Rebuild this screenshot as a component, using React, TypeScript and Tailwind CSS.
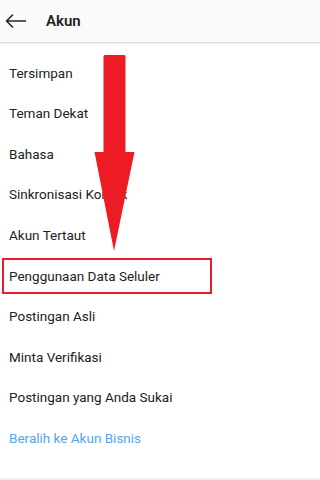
const items = [
  "Tersimpan",
  "Teman Dekat",
  "Bahasa",
  "Sinkronisasi Kontak",
  "Akun Tertaut",
  "Penggunaan Data Seluler",
  "Postingan Asli",
  "Minta Verifikasi",
  "Postingan yang Anda Sukai",
];

export default function App() {
  return (
    <div className="relative w-full h-[480px] overflow-hidden bg-white font-['Roboto',sans-serif] text-[#222222]">
      {/* Header */}
      <header className="flex items-center h-[43px] bg-[#fafafa] border-b border-[#dcdcdc] shadow-[0_1px_1px_rgba(0,0,0,0.04)]">
        <svg className="ml-[5px] w-[21px] h-[14px]" viewBox="0 0 21 14" fill="none">
          <path d="M20.5 7H1.5M7.5 1L1.5 7L7.5 13" stroke="#262626" strokeWidth="1.6" strokeLinecap="round" strokeLinejoin="round" />
        </svg>
        <h1 className="ml-[20px] text-[15px] font-semibold">Akun</h1>
      </header>

      {/* List */}
      <ul className="pt-[9.5px]">
        {items.map((label) => (
          <li key={label} className="relative flex items-center h-[40.6px] px-[9px] text-[13.5px]">
            {label}
            {label === "Penggunaan Data Seluler" && (
              <span className="absolute left-[2px] top-[3px] w-[210px] h-[36px] border-2 border-[#e81c2a]" />
            )}
          </li>
        ))}
        <li className="flex items-center h-[40.6px] px-[9px] text-[13.5px] text-[#56a5f2]">
          Beralih ke Akun Bisnis
        </li>
      </ul>

      {/* Annotation arrow */}
      <svg className="absolute left-[94px] top-[55px] w-[41px] h-[197px]" viewBox="0 0 41 197">
        <path d="M9.5 1.5Q9.5 0 11 0H30Q31.5 0 31.5 1.5V97H40.5L20 196L0.5 97H9.5Z" fill="#ed1c24" />
      </svg>

      <div className="absolute left-0 bottom-0 w-full h-[2px] bg-[#f2f2f2]" />
    </div>
  );
}
